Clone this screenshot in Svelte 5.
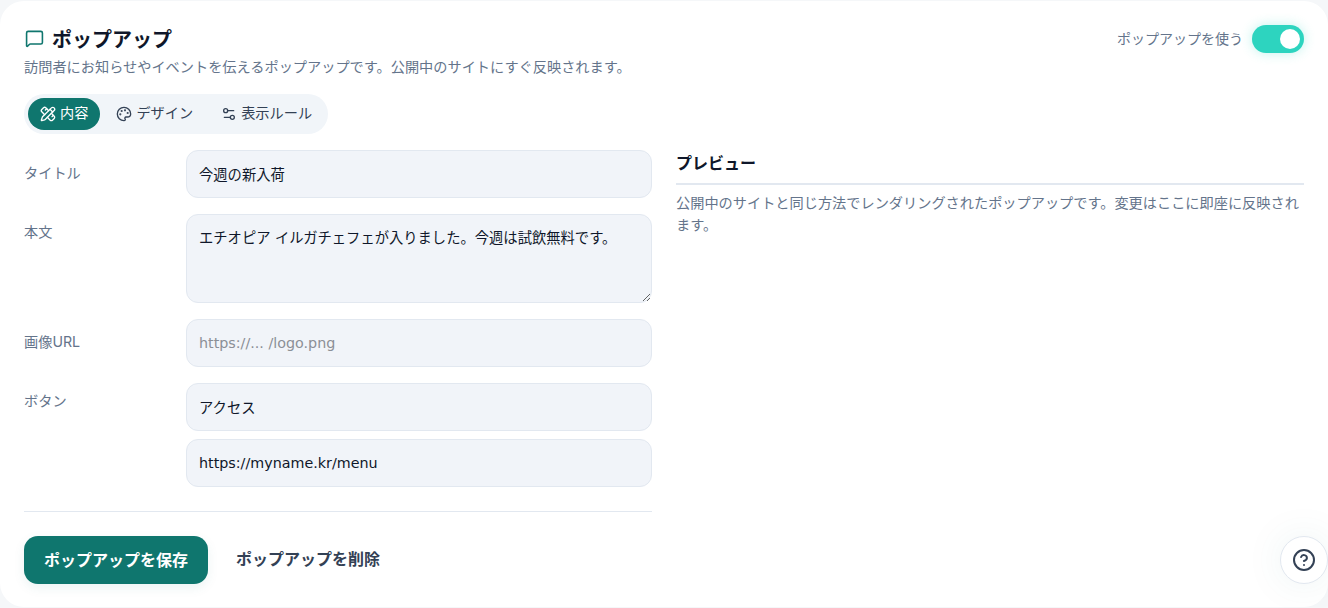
<script>
	let enabled = $state(true);
	let tab = $state('content');
	let title = $state('今週の新入荷');
	let body = $state('エチオピア イルガチェフェが入りました。今週は試飲無料です。');
	let imageUrl = $state('');
	let buttonLabel = $state('アクセス');
	let buttonUrl = $state('https://myname.kr/menu');
</script>

<div class="page">
	<main class="card">
		<header class="head">
			<div>
				<h1>
					<svg class="chat" width="19" height="19" viewBox="0 0 24 24" fill="none" stroke="currentColor" stroke-width="2" stroke-linecap="round" stroke-linejoin="round">
						<path d="M22 17a2 2 0 0 1-2 2H6.828a2 2 0 0 0-1.414.586l-2.202 2.202A.71.71 0 0 1 2 21.286V5a2 2 0 0 1 2-2h16a2 2 0 0 1 2 2z" />
					</svg>
					ポップアップ
				</h1>
				<p class="sub">訪問者にお知らせやイベントを伝えるポップアップです。公開中のサイトにすぐ反映されます。</p>
			</div>
			<label class="switch-row">
				<span>ポップアップを使う</span>
				<button class="switch" class:on={enabled} aria-label="ポップアップを使う" onclick={() => (enabled = !enabled)}>
					<i></i>
				</button>
			</label>
		</header>

		<nav class="tabs">
			<button class:active={tab === 'content'} onclick={() => (tab = 'content')}>
				<svg width="16" height="16" viewBox="0 0 24 24" fill="none" stroke="currentColor" stroke-width="2" stroke-linecap="round" stroke-linejoin="round">
					<path d="M13 7 8.700 2.700a2.410 2.410 0 0 0-3.400 0L2.700 5.300a2.410 2.410 0 0 0 0 3.400L7 13" />
					<path d="m8 6 2-2" />
					<path d="m18 16 2-2" />
					<path d="m17 11 4.300 4.300c.94.94.94 2.460 0 3.400l-2.600 2.600c-.94.94-2.460.94-3.400 0L11 17" />
					<path d="M21.174 6.812a1 1 0 0 0-3.986-3.987L3.842 16.174a2 2 0 0 0-.5.83l-1.321 4.352a.5.5 0 0 0 .623.622l4.353-1.320a2 2 0 0 0 .83-.497z" />
					<path d="m15 5 4 4" />
				</svg>
				<span>内容</span>
			</button>
			<button class:active={tab === 'design'} onclick={() => (tab = 'design')}>
				<svg width="16" height="16" viewBox="0 0 24 24" fill="none" stroke="currentColor" stroke-width="2" stroke-linecap="round" stroke-linejoin="round">
					<path d="M12 22a10 10 0 1 1 10-10c0 2.800-2.200 4.500-5 4.500h-2a1.800 1.800 0 0 0-1.300 3c.6.700.3 2.500-1.700 2.500z" />
					<circle cx="13.500" cy="6.500" r=".6" fill="currentColor" /><circle cx="17.500" cy="10.500" r=".6" fill="currentColor" />
					<circle cx="6.500" cy="12.500" r=".6" fill="currentColor" /><circle cx="8.500" cy="7.500" r=".6" fill="currentColor" />
				</svg>
				<span>デザイン</span>
			</button>
			<button class:active={tab === 'rules'} onclick={() => (tab = 'rules')}>
				<svg width="16" height="16" viewBox="0 0 24 24" fill="none" stroke="currentColor" stroke-width="2" stroke-linecap="round" stroke-linejoin="round">
					<path d="M14 17H5" /><path d="M19 7h-9" />
					<circle cx="17" cy="17" r="3" /><circle cx="7" cy="7" r="3" />
				</svg>
				<span>表示ルール</span>
			</button>
		</nav>

		<div class="columns">
			<section class="form">
				<div class="field">
					<span class="label">タイトル</span>
					<input class="ja" bind:value={title} />
				</div>
				<div class="field">
					<span class="label">本文</span>
					<textarea bind:value={body}></textarea>
				</div>
				<div class="field">
					<span class="label">画像URL</span>
					<input bind:value={imageUrl} placeholder="https://... /logo.png" />
				</div>
				<div class="field">
					<span class="label">ボタン</span>
					<div class="stack">
						<input class="ja" bind:value={buttonLabel} />
						<input bind:value={buttonUrl} />
					</div>
				</div>
				<div class="actions">
					<button class="save">ポップアップを保存</button>
					<button class="delete">ポップアップを削除</button>
				</div>
			</section>

			<aside class="preview">
				<h2>プレビュー</h2>
				<p>公開中のサイトと同じ方法でレンダリングされたポップアップです。変更はここに即座に反映されます。</p>
			</aside>
		</div>
	</main>

	<button class="help" aria-label="ヘルプ">
		<svg width="24" height="24" viewBox="0 0 24 24" fill="none" stroke="currentColor" stroke-width="2" stroke-linecap="round" stroke-linejoin="round">
			<circle cx="12" cy="12" r="10" />
			<path d="M9.100 9a3 3 0 0 1 5.800 1c0 2-3 3-3 3" />
			<path d="M12 17h.01" />
		</svg>
	</button>
</div>

<style>
	:global(body) {
		background: #f5f7f9;
		font-family: Inter, "Noto Sans CJK JP", sans-serif;
	}

	.page {
		height: 608px;
		overflow: hidden;
		box-sizing: border-box;
		padding-top: 1px;
		position: relative;
	}

	.card {
		background: #fff;
		border-radius: 24px;
		height: 606px;
		box-sizing: border-box;
		padding: 24px;
	}

	.head {
		display: flex;
		justify-content: space-between;
		align-items: flex-start;
	}

	h1 {
		display: flex;
		align-items: center;
		gap: 8px;
		margin: 0;
		font-size: 20px;
		line-height: 30px;
		padding-bottom: 2px;
		font-weight: 700;
		color: #0f172a;
	}

	.chat {
		color: #0f766e;
		margin: -3px 0 0 1px;
	}

	.sub {
		margin: 0;
		font-size: 14.2px;
		line-height: 20px;
		color: #64748b;
	}

	.switch-row {
		display: flex;
		align-items: center;
		gap: 9px;
		font-size: 14px;
		color: #64748b;
		height: 28px;
	}

	.switch-row span {
		padding-bottom: 2px;
	}

	.switch {
		width: 52px;
		height: 28px;
		border: 0;
		border-radius: 14px;
		background: #cbd5e1;
		display: flex;
		align-items: center;
		padding: 4px;
		box-sizing: border-box;
		cursor: pointer;
	}

	.switch.on {
		background: #2dd4bf;
		justify-content: flex-end;
		box-shadow: 0 0 12px rgba(45, 212, 191, 0.3);
	}

	.switch i {
		display: block;
		width: 20px;
		height: 20px;
		border-radius: 50%;
		background: #fff;
	}

	.tabs {
		display: inline-flex;
		gap: 4px;
		margin-top: 17px;
		padding: 4px;
		background: #f1f5f9;
		border-radius: 20px;
		vertical-align: top;
	}

	.tabs button {
		display: flex;
		align-items: center;
		gap: 4px;
		height: 32px;
		padding: 0 12px;
		border: 0;
		border-radius: 16px;
		background: none;
		font: inherit;
		font-size: 14.2px;
		line-height: 20px;
		color: #334155;
		cursor: pointer;
	}

	.tabs button span {
		padding-bottom: 2px;
	}

	.tabs button.active {
		background: #0f766e;
		color: #fff;
	}

	.columns {
		display: grid;
		grid-template-columns: 1fr 1fr;
		gap: 24px;
		margin-top: 16px;
	}

	.field {
		display: grid;
		grid-template-columns: 162px 1fr;
		margin-bottom: 16px;
	}

	.label {
		font-size: 14.2px;
		line-height: 20px;
		color: #64748b;
		padding-top: 13px;
	}

	.field:nth-child(2) .label,
	.field:nth-child(4) .label {
		padding-top: 8px;
	}

	input,
	textarea {
		display: block;
		width: 100%;
		box-sizing: border-box;
		border: 1px solid #e2e8f0;
		border-radius: 12px;
		background: #f1f4f9;
		font-family: "DejaVu Sans", "Noto Sans CJK JP", sans-serif;
		font-size: 14.3px;
		line-height: 20px;
		color: #0f172a;
		padding: 0 12px;
		height: 48px;
		outline: none;
	}

	input.ja {
		padding-bottom: 2px;
	}

	textarea {
		height: 89px;
		padding-top: 13px;
		resize: vertical;
	}

	input::placeholder {
		color: #8b8f96;
	}

	.stack {
		display: flex;
		flex-direction: column;
		gap: 8px;
	}

	.actions {
		display: flex;
		align-items: center;
		gap: 28px;
		border-top: 1px solid #e2e8f0;
		margin-top: 24px;
		padding-top: 24px;
	}

	.actions button {
		font: inherit;
		font-size: 16px;
		line-height: 22px;
		font-weight: 700;
		border: 0;
		background: none;
		padding: 0;
		cursor: pointer;
	}

	.actions .save {
		height: 48px;
		padding: 0 20px 1px;
		background: #0f766e;
		color: #fff;
		border-radius: 14px;
		box-shadow: 0 4px 12px rgba(15, 118, 110, 0.08);
	}

	.actions .delete {
		color: #334155;
		padding-bottom: 2px;
	}

	.preview h2 {
		margin: 0;
		padding: 1px 0 8px;
		font-size: 16px;
		line-height: 24px;
		font-weight: 700;
		color: #0f172a;
		border-bottom: 2px solid #e2e8f0;
	}

	.preview p {
		margin: 7px 0 0;
		font-size: 14.2px;
		line-height: 22px;
		color: #64748b;
	}

	.help {
		position: absolute;
		right: 0;
		bottom: 24px;
		width: 48px;
		height: 48px;
		display: flex;
		align-items: center;
		justify-content: center;
		padding: 0;
		border-radius: 50%;
		border: 1px solid #e2e8f0;
		background: #fff;
		color: #334155;
		box-shadow: 0 0 40px rgba(15, 118, 110, 0.08);
		cursor: pointer;
	}
</style>
